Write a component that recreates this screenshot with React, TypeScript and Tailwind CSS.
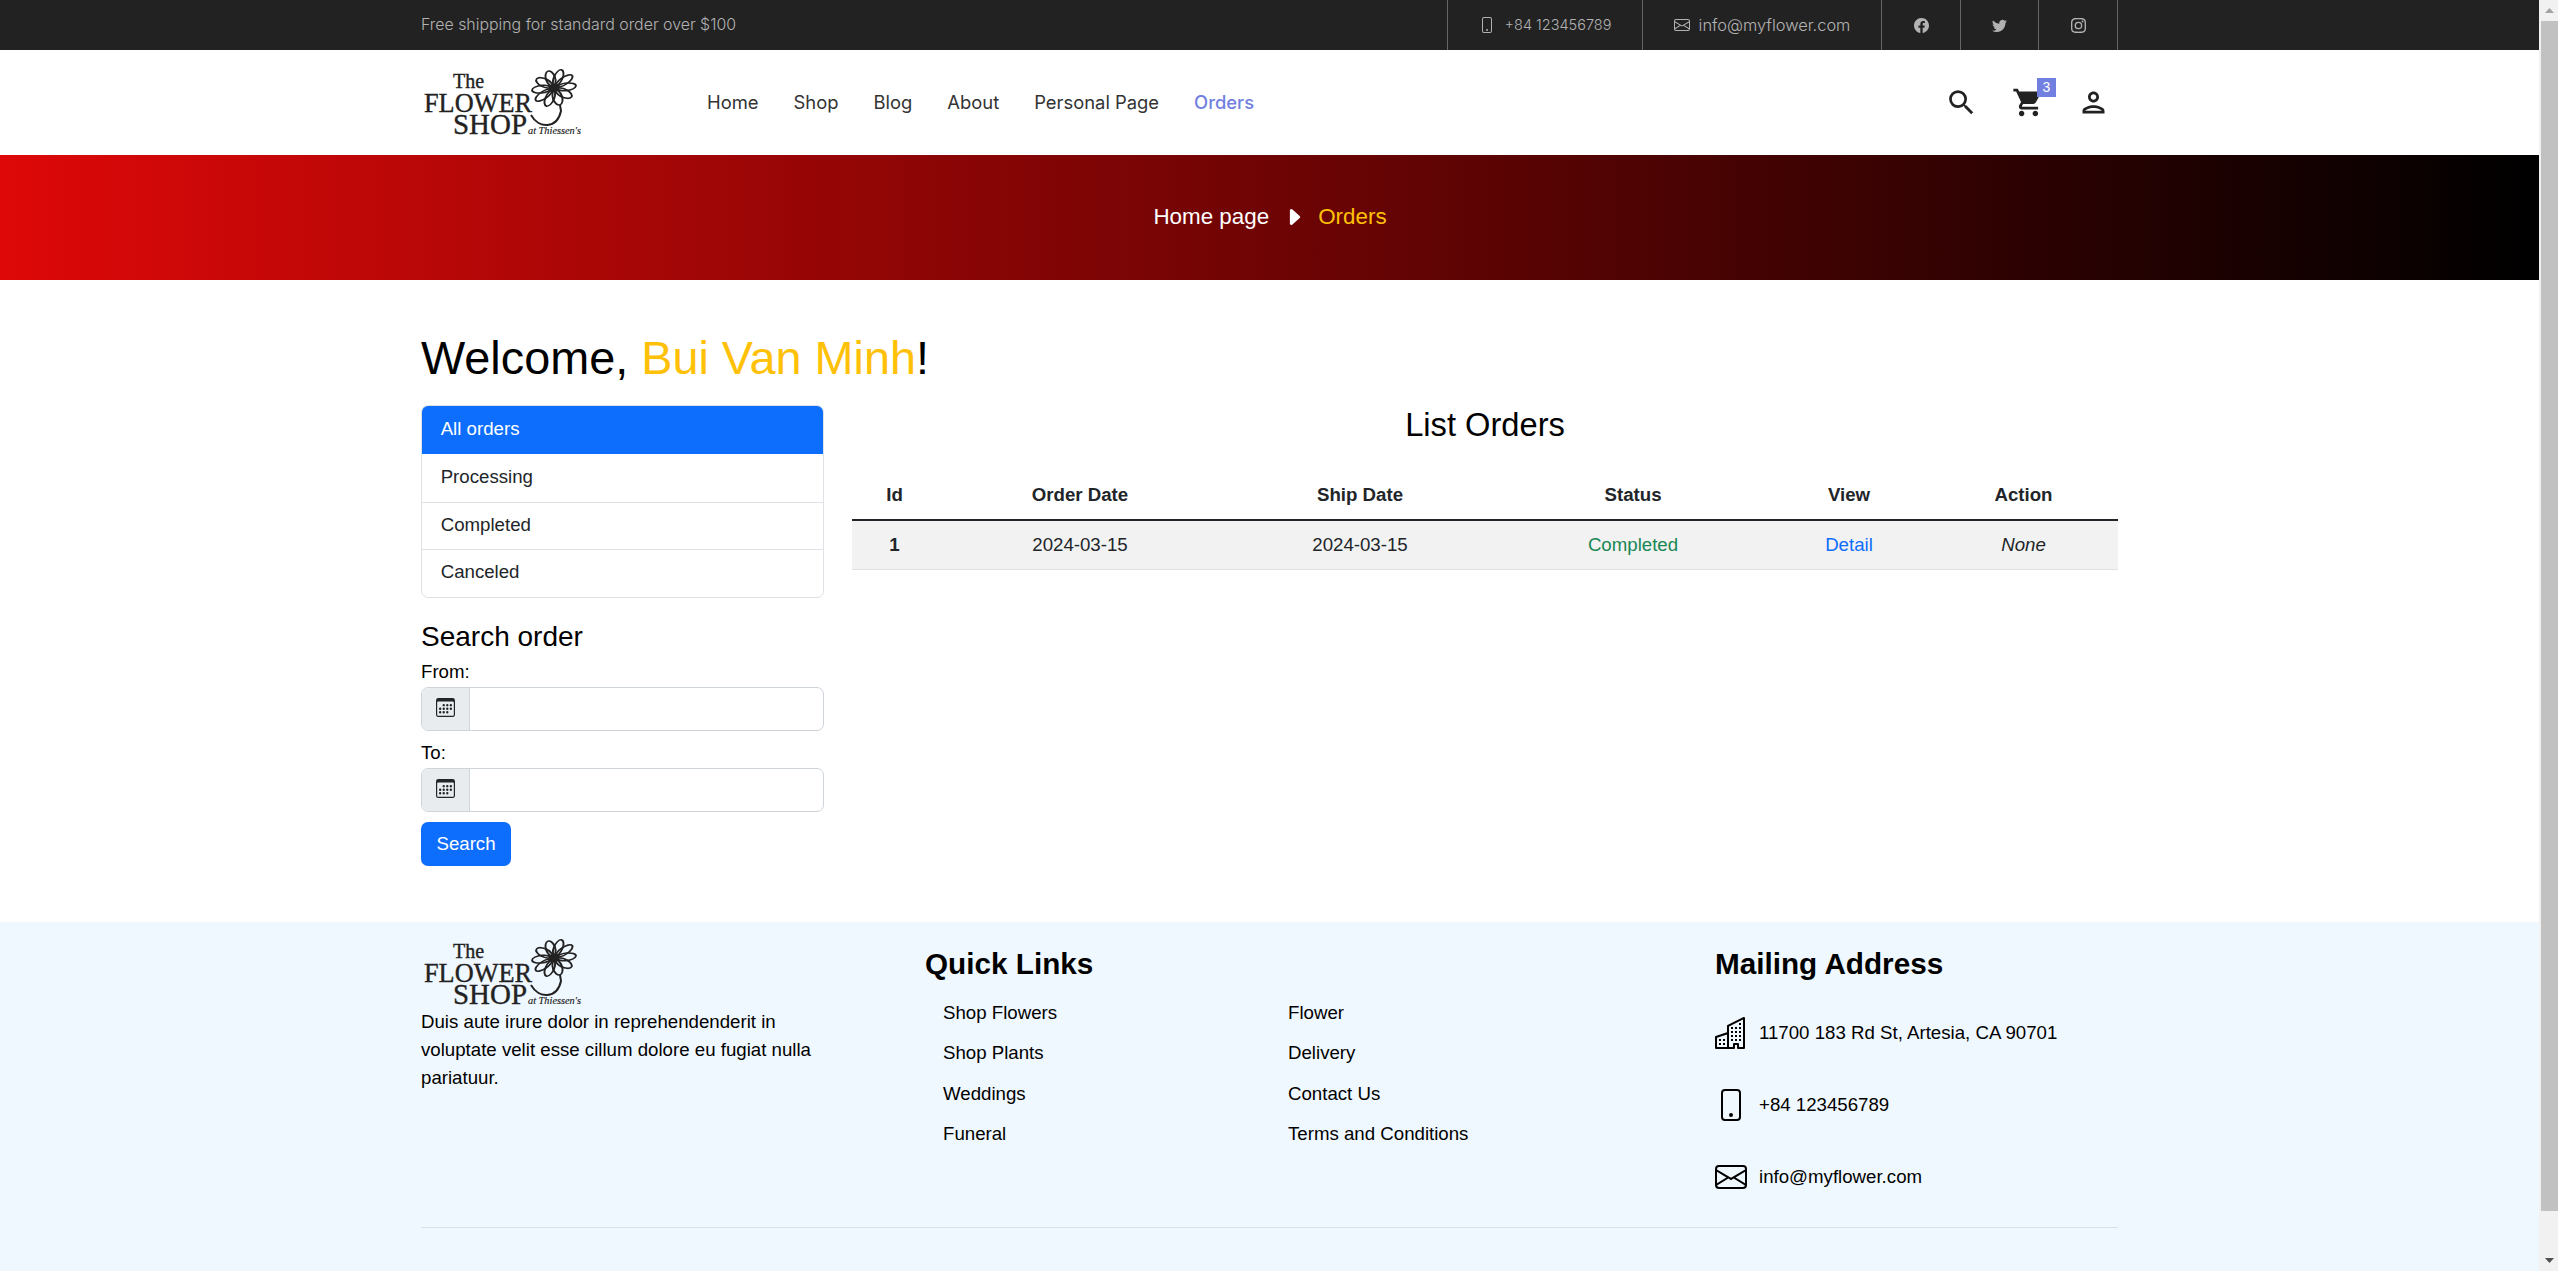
import React from "react";
import { BsBuildings, BsCalendar3, BsCaretRightFill, BsEnvelope, BsFacebook, BsInstagram, BsPhone, BsTwitter } from "react-icons/bs";
import { MdOutlinePerson, MdSearch, MdShoppingCart } from "react-icons/md";

const navLinks = ["Home", "Shop", "Blog", "About", "Personal Page"];
const sideLinks = ["Processing", "Completed", "Canceled"];
const quickLinks = ["Shop Flowers", "Flower", "Shop Plants", "Delivery", "Weddings", "Contact Us", "Funeral", "Terms and Conditions"];
const petals = [0, 36, 72, 108, 144, 180, 216, 252, 288, 324];

const Logo = () => (
  <svg width="170" height="71" viewBox="0 0 170 71" className="block shrink-0 overflow-visible" fill="#222" stroke="#222" strokeWidth="0.35">
    <text x="32" y="21" fontFamily="Liberation Serif" fontSize="20">The</text>
    <text x="3" y="45" fontFamily="Liberation Serif" fontSize="27" textLength="108" lengthAdjust="spacingAndGlyphs">FLOWER</text>
    <text x="32" y="67" fontFamily="Liberation Serif" fontSize="30" textLength="74" lengthAdjust="spacingAndGlyphs">SHOP</text>
    <text x="107" y="67" fontFamily="Liberation Serif" fontSize="9.5" fontStyle="italic" textLength="53" lengthAdjust="spacingAndGlyphs" strokeWidth="0.15">at Thiessen's</text>
    <g transform="translate(133 21) rotate(-20) scale(1.15 0.92)">
      {petals.map((a) => (
        <ellipse key={a} cx="0" cy="-11" rx="4" ry="8.5" fill="none" stroke="#222" strokeWidth="1.7" transform={`rotate(${a})`} />
      ))}
      <ellipse cx="0" cy="0" rx="5" ry="3.6" fill="#222" />
    </g>
    <path d="M110 48 C118 62 136 62 140 44 L139 38" fill="none" stroke="#222" strokeWidth="2" />
  </svg>
);

const DateField = ({ label }: { label: string }) => (
  <>
    <label className="block h-[28px] text-[18.67px] leading-[28px] text-black">{label}</label>
    <div className="mt-px flex h-[44px] rounded-[7px] border border-[#ced4da] bg-white">
      <span className="flex w-[48px] items-center justify-center rounded-l-[6px] border-r border-[#ced4da] bg-[#e9ecef] pb-[3px] text-[#212529]">
        <BsCalendar3 size={19} />
      </span>
      <input className="min-w-0 flex-1 rounded-r-[6px] outline-none" />
    </div>
  </>
);

export default function App() {
  return (
    <div className="flex h-screen overflow-hidden bg-white font-['Liberation_Sans',Arial,sans-serif]">
      <div className="flex w-[2539px] shrink-0 flex-col">
        {/* Top bar */}
        <div className="h-[50px] shrink-0 bg-[#222222] text-[#b2b2b2]">
          <div className="mx-auto flex h-full w-[1697px] items-center justify-between font-['Inter',sans-serif] text-[15.9px] font-light">
            <span>Free shipping for standard order over $100</span>
            <div className="flex h-full border-r border-[#666666]">
              <div className="flex w-[195px] items-center justify-center gap-[10px] border-l border-[#666666] text-[14.5px]">
                <BsPhone size={16} />
                <span>+84 123456789</span>
              </div>
              <div className="flex w-[239px] items-center justify-center gap-[9px] border-l border-[#666666] text-[16.4px]">
                <BsEnvelope size={16} />
                <span>info@myflower.com</span>
              </div>
              <div className="flex w-[79px] items-center justify-center border-l border-[#666666]"><BsFacebook size={15} /></div>
              <div className="flex w-[78px] items-center justify-center border-l border-[#666666]"><BsTwitter size={15} /></div>
              <div className="flex w-[79px] items-center justify-center border-l border-[#666666]"><BsInstagram size={15} /></div>
            </div>
          </div>
        </div>

        {/* Header */}
        <header className="h-[105px] shrink-0 bg-white">
          <div className="mx-auto flex h-full w-[1697px] items-center">
            <Logo />
            <nav className="ml-[116px] flex items-center gap-[35px] font-['Inter',sans-serif] text-[18.4px] text-[#333333]">
              {navLinks.map((link) => (
                <a key={link}>{link}</a>
              ))}
              <a className="font-medium text-[#717fe0]">Orders</a>
            </nav>
            <div className="ml-auto mr-[8px] flex items-center text-[#222222]">
              <MdSearch size={33} />
              <div className="relative ml-[34px]">
                <MdShoppingCart size={33} />
                <span className="absolute -right-[11px] -top-[8px] flex h-[19px] w-[19px] items-center justify-center bg-[#717fe0] text-[14px] text-white">3</span>
              </div>
              <MdOutlinePerson size={33} className="ml-[32px]" />
            </div>
          </div>
        </header>

        {/* Breadcrumb */}
        <div className="flex h-[125px] shrink-0 items-center justify-center gap-[13px] bg-[linear-gradient(to_right,#de0808,#000000)] pb-px pl-px text-[22.4px]">
          <span className="text-white">Home page</span>
          <BsCaretRightFill size={22} className="ml-px text-white" />
          <span className="text-[#ffc107]">Orders</span>
        </div>

        {/* Main */}
        <main className="mx-auto h-[642px] w-[1697px] shrink-0 pt-[50px]">
          <h1 className="h-[56px] text-[46.8px] leading-[56px] text-black">
            Welcome, <span className="text-[#ffc107]">Bui Van Minh</span>!
          </h1>
          <div className="mt-[19px] flex gap-[28px]">
            <aside className="w-[403px] shrink-0">
              <div className="overflow-hidden rounded-[7px] border border-[#dee2e6] text-[18.67px] leading-[28px] text-[#212529]">
                <div className="-mx-px -mt-px h-[49px] bg-[#0d6efd] px-[19.67px] py-[10px] text-white">All orders</div>
                {sideLinks.map((item, i) => (
                  <div key={item} className={`h-[47.5px] px-[18.67px] py-[9px] ${i > 0 ? "border-t border-[#dee2e6] pt-[8px]" : ""}`}>
                    {item}
                  </div>
                ))}
              </div>
              <h2 className="mt-[22px] mb-[4.5px] text-[28px] leading-[33.6px] text-black">Search order</h2>
              <DateField label="From:" />
              <div className="h-[8px]" />
              <DateField label="To:" />
              <button className="mt-[10px] block h-[44px] w-[90px] rounded-[7px] bg-[#0d6efd] text-[18.67px] text-white">Search</button>
            </aside>

            <section className="min-w-0 flex-1">
              <h2 className="mb-[28px] h-[39px] text-center text-[32.67px] leading-[39px] text-black">List Orders</h2>
              <table className="w-full table-fixed border-collapse text-center text-[18.67px] leading-[28px] text-[#212529]">
                <colgroup>
                  <col className="w-[85px]" />
                  <col className="w-[286px]" />
                  <col className="w-[274px]" />
                  <col className="w-[272px]" />
                  <col className="w-[160px]" />
                  <col className="w-[189px]" />
                </colgroup>
                <thead>
                  <tr className="h-[48px] border-b-2 border-[#212529] [&>th]:pb-[2px]">
                    <th>Id</th>
                    <th>Order Date</th>
                    <th>Ship Date</th>
                    <th>Status</th>
                    <th>View</th>
                    <th>Action</th>
                  </tr>
                </thead>
                <tbody>
                  <tr className="h-[49px] border-b border-[#dee2e6] bg-[#f2f2f2]">
                    <td className="font-bold">1</td>
                    <td>2024-03-15</td>
                    <td>2024-03-15</td>
                    <td className="text-[#198754]">Completed</td>
                    <td className="text-[#0d6efd]">Detail</td>
                    <td className="italic">None</td>
                  </tr>
                </tbody>
              </table>
            </section>
          </div>
        </main>

        {/* Footer */}
        <footer className="flex-1 bg-[#f0f8ff] text-black">
          <div className="mx-auto w-[1697px] pt-[15px]">
            <div className="flex h-[290px]">
              <div className="w-[504px] shrink-0">
                <Logo />
                <p className="w-[403px] text-[18.67px] leading-[28px]">
                  Duis aute irure dolor in reprehendenderit in voluptate velit esse cillum dolore eu fugiat nulla pariatuur.
                </p>
              </div>
              <div className="w-[790px] shrink-0">
                <h4 className="mt-[9px] h-[36px] text-[29.7px] font-bold leading-[36px]">Quick Links</h4>
                <div className="mt-[11px] grid w-[690px] grid-cols-[345px_345px] pl-[18px] text-[18.67px]">
                  {quickLinks.map((link) => (
                    <a key={link} className="h-[40.33px] leading-[40px]">{link}</a>
                  ))}
                </div>
              </div>
              <div className="flex-1">
                <h4 className="mt-[9px] h-[36px] text-[29.7px] font-bold leading-[36px]">Mailing Address</h4>
                <div className="mt-[15px] flex flex-col text-[18.67px]">
                  <div className="flex h-[72px] items-center gap-[12px]"><BsBuildings size={32} /><span>11700 183 Rd St, Artesia, CA 90701</span></div>
                  <div className="flex h-[72px] items-center gap-[12px]"><BsPhone size={32} /><span>+84 123456789</span></div>
                  <div className="flex h-[72px] items-center gap-[12px]"><BsEnvelope size={32} /><span>info@myflower.com</span></div>
                </div>
              </div>
            </div>
            <hr className="border-t border-[#dcdfe3]" />
          </div>
        </footer>
      </div>

      {/* Browser scrollbar */}
      <div className="flex w-[19px] shrink-0 flex-col bg-[#f1f1f1] pl-[2px]">
        <div className="flex h-[21px] items-center justify-center">
          <svg width="9" height="5" viewBox="0 0 9 5"><path d="M4.5 0L9 5H0z" fill="#a3a3a3" /></svg>
        </div>
        <div className="h-[1190px] bg-[#c1c1c1]" />
        <div className="flex-1" />
        <div className="flex h-[21px] items-center justify-center">
          <svg width="9" height="5" viewBox="0 0 9 5"><path d="M0 0H9L4.5 5z" fill="#505050" /></svg>
        </div>
      </div>
    </div>
  );
}
